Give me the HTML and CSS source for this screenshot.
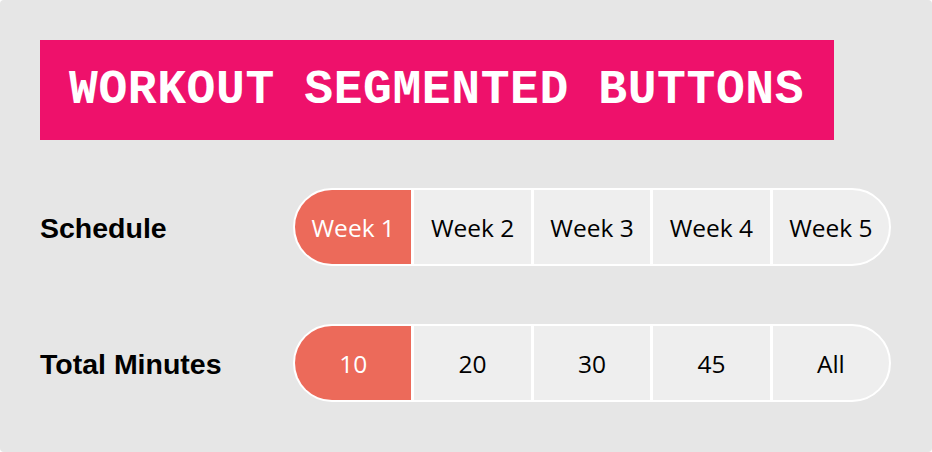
FILE: index.html
```html
<!DOCTYPE html>
<html>
<head>
<meta charset="utf-8">
<link rel="stylesheet" href="styles.css">
</head>
<body>
<div class="card">
  <h1 class="title">WORKOUT SEGMENTED BUTTONS</h1>
  <div class="rows">
    <div class="label">Schedule</div>
    <div class="seg">
      <button class="btn active">Week 1</button>
      <button class="btn">Week 2</button>
      <button class="btn">Week 3</button>
      <button class="btn">Week 4</button>
      <button class="btn">Week 5</button>
    </div>
    <div class="label">Total Minutes</div>
    <div class="seg">
      <button class="btn active">10</button>
      <button class="btn">20</button>
      <button class="btn">30</button>
      <button class="btn">45</button>
      <button class="btn">All</button>
    </div>
  </div>
</div>
</body>
</html>
```
FILE: styles.css
```css
html, body {
  margin: 0;
  padding: 0;
  background: #ffffff;
}
.card {
  width: 932px;
  height: 452px;
  box-sizing: border-box;
  background: #e6e6e6;
  border-radius: 4px;
  padding: 40px;
}
.title {
  display: inline-block;
  margin: 0;
  background: #ee116b;
  color: #ffffff;
  font-family: "Liberation Mono", monospace;
  font-weight: bold;
  font-size: 48px;
  letter-spacing: 0.6px;
  line-height: 100px;
  height: 100px;
  width: 794px;
  box-sizing: border-box;
  padding: 0 29px;
  white-space: nowrap;
}
.rows {
  display: grid;
  grid-template-columns: 253px 598px;
  row-gap: 58px;
  align-items: center;
  margin-top: 48px;
}
.label {
  font-family: "Liberation Sans", Arial, sans-serif;
  font-weight: bold;
  font-size: 28.5px;
  color: #000000;
  padding-top: 2px;
}
.seg {
  display: flex;
  gap: 3px;
  height: 78px;
  box-sizing: border-box;
  border: 2px solid #ffffff;
  border-radius: 39px;
  background: #ffffff;
  overflow: hidden;
}
.btn {
  flex: 1;
  border: none;
  margin: 0;
  padding: 0;
  background: #eeeeee;
  color: #000000;
  font-family: "Open Sans", sans-serif;
  font-size: 24.5px;
}
.btn.active {
  background: #ec6a5a;
  color: #ffffff;
}
```
